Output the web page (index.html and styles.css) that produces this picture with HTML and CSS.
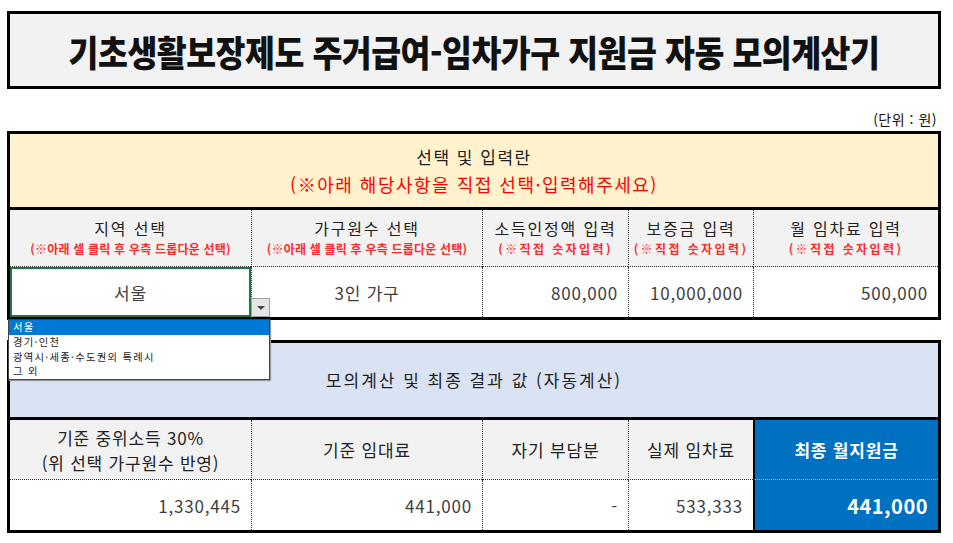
FILE: index.html
```html
<!DOCTYPE html>
<html lang="ko">
<head>
<meta charset="utf-8">
<link rel="stylesheet" href="styles.css">
</head>
<body>
<div class="page">
  <div class="title-box">
    <h1 class="title">기초생활보장제도 주거급여-임차가구 지원금 자동 모의계산기</h1>
  </div>
  <div class="unit">(단위 : 원)</div>

  <section class="section input-sec">
    <div class="sec-head yellow">
      <div class="head-main">선택 및 입력란</div>
      <div class="head-red">(※아래 해당사항을 직접 선택·입력해주세요)</div>
    </div>
    <div class="grid">
      <div class="hcell">
        <div class="hlabel">지역 선택</div>
        <div class="hnote">(※아래 셀 클릭 후 우측 드롭다운 선택)</div>
      </div>
      <div class="hcell dl">
        <div class="hlabel">가구원수 선택</div>
        <div class="hnote">(※아래 셀 클릭 후 우측 드롭다운 선택)</div>
      </div>
      <div class="hcell dl">
        <div class="hlabel">소득인정액 입력</div>
        <div class="hnote spaced">(※직접 숫자입력)</div>
      </div>
      <div class="hcell dl">
        <div class="hlabel">보증금 입력</div>
        <div class="hnote spaced">(※직접 숫자입력)</div>
      </div>
      <div class="hcell dl">
        <div class="hlabel">월 임차료 입력</div>
        <div class="hnote spaced">(※직접 숫자입력)</div>
      </div>

      <div class="dcell center selected">
        서울
        <div class="dd-btn"><span class="tri"></span></div>
        <ul class="dd-list">
          <li class="active">서울</li>
          <li>경기·인천</li>
          <li>광역시·세종·수도권외 특례시</li>
          <li>그 외</li>
        </ul>
      </div>
      <div class="dcell center dl">3인 가구</div>
      <div class="dcell right dl">800,000</div>
      <div class="dcell right dl">10,000,000</div>
      <div class="dcell right dl">500,000</div>
    </div>
  </section>

  <section class="section result-sec">
    <div class="sec-head blue">
      <div class="head-main">모의계산 및 최종 결과 값 (자동계산)</div>
    </div>
    <div class="grid rgrid">
      <div class="hcell big">
        <div>기준 중위소득 30%</div>
        <div>(위 선택 가구원수 반영)</div>
      </div>
      <div class="hcell big dl">기준 임대료</div>
      <div class="hcell big dl">자기 부담분</div>
      <div class="hcell big dl">실제 임차료</div>
      <div class="hcell big final">최종 월지원금</div>

      <div class="dcell right">1,330,445</div>
      <div class="dcell right dl">441,000</div>
      <div class="dcell right dl">-</div>
      <div class="dcell right dl">533,333</div>
      <div class="dcell right final final-val">441,000</div>
    </div>
  </section>
</div>
</body>
</html>
```

FILE: styles.css
```css
* { box-sizing: border-box; margin: 0; padding: 0; }
html, body { background: #ffffff; }
body {
  font-family: "Noto Sans CJK KR", "Noto Sans", sans-serif;
  color: #222;
}
.page {
  width: 953px;
  padding: 11px 0 0 7px;
}
.title-box {
  width: 934px;
  height: 78px;
  border: 3px solid #000;
  background: #f2f2f2;
  display: flex;
  align-items: center;
  justify-content: center;
}
.title {
  font-size: 32.5px;
  font-weight: 900;
  letter-spacing: -0.5px;
  color: #111;
  transform: scaleY(1.12);
}
.unit {
  width: 930px;
  text-align: right;
  font-size: 14px;
  letter-spacing: 0.5px;
  line-height: 16px;
  margin-top: 22px;
  margin-bottom: 4px;
  color: #111;
}
.section {
  position: relative;
  width: 934px;
  border: 3px solid #000;
}
.result-sec { margin-top: 20px; }
.sec-head {
  height: 76px;
  border-bottom: 3px solid #000;
  display: flex;
  flex-direction: column;
  align-items: center;
  justify-content: center;
}
.yellow { background: #fff2cc; }
.blue { background: #dae3f3; }
.head-main { font-size: 17px; letter-spacing: 1.5px; line-height: 26px; color: #222; }
.head-red { font-size: 18px; letter-spacing: 1.5px; line-height: 28px; color: #ff0000; }
.result-sec .sec-head { height: 77px; }
.result-sec .head-main { font-size: 17px; letter-spacing: 2px; }

.grid {
  display: grid;
  grid-template-columns: 241px 231px 146px 125px 185px;
  grid-template-rows: 57px 50px;
}
.rgrid { grid-template-rows: 60px 50px; }
.hcell {
  background: #f2f2f2;
  border-bottom: 1px dotted #333;
  display: flex;
  flex-direction: column;
  align-items: center;
  justify-content: center;
  text-align: center;
}
.dl { border-left: 1px dotted #333; }
.hlabel { font-size: 16px; letter-spacing: 1.8px; line-height: 21px; color: #222; }
.hnote {
  font-size: 12px;
  font-weight: 700;
  line-height: 19px;
  color: #ff2a2a;
  letter-spacing: 0.2px;
}
.hnote.spaced { letter-spacing: 2.4px; }
.big { font-size: 17px; letter-spacing: 0.8px; line-height: 25px; color: #222; }
.dcell {
  position: relative;
  background: #fff;
  font-size: 17px;
  letter-spacing: 0.8px;
  color: #404040;
  display: flex;
  align-items: center;
  padding: 0 10px;
}
.center { justify-content: center; }
.right { justify-content: flex-end; }
.selected {
  outline: 2px solid #217346;
  outline-offset: -2px;
  z-index: 2;
}
.final {
  background: #0070c0;
  color: #fff;
  font-weight: 700;
  border-left: 2px solid #000;
}
.hcell.final { border-bottom: 1px dotted #9cc3e6; }
.final-val { font-size: 20px; letter-spacing: 0.5px; }

.dd-btn {
  position: absolute;
  left: 241px;
  top: 31px;
  width: 19px;
  height: 19px;
  background: #e6e6e6;
  border: 1px solid #a0a0a0;
  display: flex;
  align-items: center;
  justify-content: center;
  z-index: 3;
}
.tri {
  width: 0;
  height: 0;
  border-left: 4px solid transparent;
  border-right: 4px solid transparent;
  border-top: 4px solid #444;
}
.dd-list {
  position: absolute;
  left: -2px;
  top: 52px;
  width: 262px;
  height: 61px;
  background: #fff;
  border: 1px solid #444;
  list-style: none;
  z-index: 4;
  box-shadow: 1px 1px 1px #999;
}
.dd-list li {
  font-size: 10.3px;
  line-height: 14.75px;
  height: 14.75px;
  color: #222;
  padding-left: 4px;
  letter-spacing: 1.3px;
}
.dd-list li.active {
  background: #0078d7;
  color: #fff;
}
```
